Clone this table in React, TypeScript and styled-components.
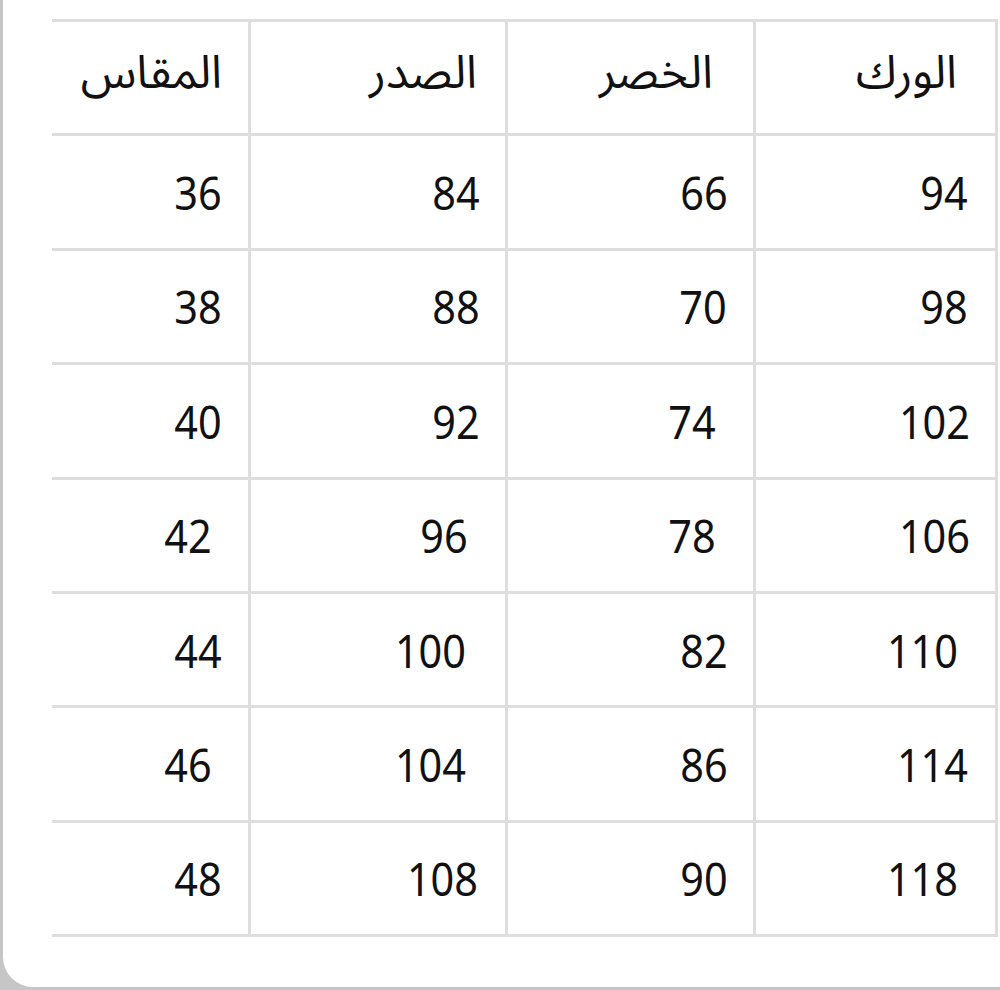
import React from "react";
import styled, { createGlobalStyle } from "styled-components";

const Global = createGlobalStyle`
  html, body { margin: 0; padding: 0; background: #c6c6c6; }
  body { width: 1000px; height: 990px; overflow: hidden; }
`;

const Card = styled.div`
  box-sizing: border-box;
  margin-left: 3px;
  width: 997px;
  height: 987px;
  background: #ffffff;
  border-bottom-left-radius: 30px;
  padding: 19px 2px 0 49px;
`;

const Grid = styled.div`
  direction: rtl;
  display: grid;
  grid-template-columns: 242px 248px 257px 196px;
  grid-auto-rows: 114.4px;
  width: 946px;
  box-sizing: border-box;
  border-top: 3px solid #dedede;
  border-right: 3px solid #dedede;
`;

const Cell = styled.div<{ $pr: number; $last: boolean }>`
  box-sizing: border-box;
  display: flex;
  align-items: center;
  justify-content: flex-start;
  padding-right: ${(p) => p.$pr}px;
  border-bottom: 3px solid #dedede;
  border-left: ${(p) => (p.$last ? "none" : "3px solid #dedede")};
  font-family: "Noto Sans", "Noto Sans Arabic", "DejaVu Sans", sans-serif;
  font-size: 46px;
  color: #111111;
  white-space: nowrap;
`;

const Head = styled(Cell)`
  padding-bottom: 8px;
`;

const Num = styled.span`
  display: inline-block;
  transform: scaleX(0.9);
  transform-origin: right center;
`;

type C = [string, number];

const header: C[] = [
  ["الورك", 38],
  ["الخصر", 40],
  ["الصدر", 28],
  ["المقاس", 26],
];

// each row: الورك, الخصر, الصدر, المقاس with right offsets
const rows: C[][] = [
  [["94", 27], ["66", 25], ["84", 25], ["36", 26]],
  [["98", 27], ["70", 26], ["88", 25], ["38", 26]],
  [["102", 25], ["74", 37], ["92", 25], ["40", 26]],
  [["106", 25], ["78", 37], ["96", 37], ["42", 36]],
  [["110", 37], ["82", 25], ["100", 39], ["44", 26]],
  [["114", 27], ["86", 25], ["104", 39], ["46", 36]],
  [["118", 37], ["90", 25], ["108", 27], ["48", 26]],
];

export default function App() {
  return (
    <>
      <Global />
      <Card>
        <Grid>
          {header.map(([t, pr], i) => (
            <Head key={"h" + i} $pr={pr} $last={i === 3}>
              {t}
            </Head>
          ))}
          {rows.map((r, ri) =>
            r.map(([t, pr], ci) => (
              <Cell key={ri + "-" + ci} $pr={pr} $last={ci === 3}>
                <Num>{t}</Num>
              </Cell>
            ))
          )}
        </Grid>
      </Card>
    </>
  );
}
